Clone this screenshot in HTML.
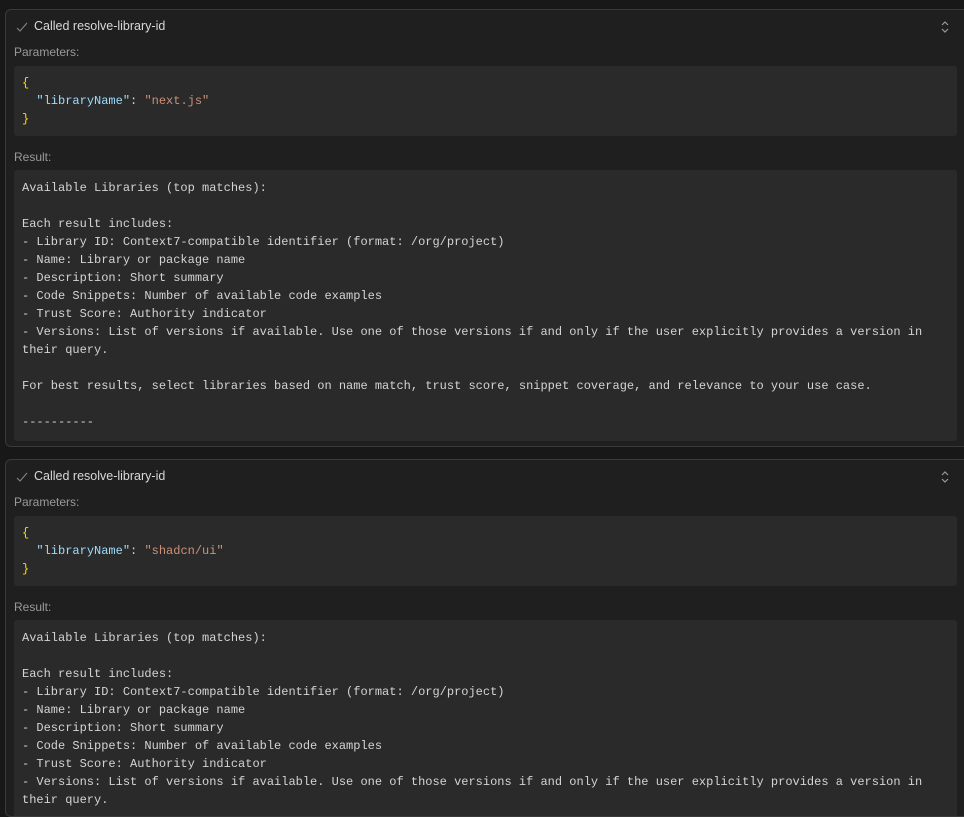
<!DOCTYPE html>
<html style="width:964px;height:817px;overflow:hidden"><head><meta charset="utf-8"><style>
*{margin:0;padding:0;box-sizing:border-box}
body{width:964px;height:817px;background:#181818;overflow:hidden;position:relative;font-family:"Liberation Sans",sans-serif}
.card{position:absolute;left:5px;width:965px;background:#1f1f1f;border:1px solid #3a3a3a;border-radius:6px;overflow:hidden}
.hdr{position:absolute;left:10px;font-size:12.5px;color:#d8d8d8}
.hdr svg{position:absolute;left:0;top:3px}
.lbl{position:absolute;left:8px;font-size:12px;color:#9a9a9a}
.blk{position:absolute;left:8px;width:943px;background:#2a2a2a;border-radius:3px;font-family:"Liberation Mono",monospace;font-size:12px;line-height:18px;color:#d4d4d4;white-space:pre;padding:8px 8px}
.b{color:#ffd700}.k{color:#9cdcfe}.s{color:#ce9178}
.chev{position:absolute;right:19px;top:10px}
</style></head><body>

<div class="card" style="top:9px;height:438px">
 <div class="hdr" style="top:9px"><svg width="12" height="10" viewBox="0 0 12 10"><path d="M1 6l3 3 7-8" fill="none" stroke="#888" stroke-width="1"/></svg><span style="margin-left:18px">Called resolve-library-id</span></div>
 <svg class="chev" width="10" height="14" viewBox="0 0 10 14"><path d="M2 5l3-3 3 3M2 9l3 3 3-3" fill="none" stroke="#999" stroke-width="1.2"/></svg>
 <div class="lbl" style="top:35px">Parameters:</div>
 <div class="blk" style="top:56px;height:70px;padding-top:8px"><span class="b">{</span>
  <span class="k">"libraryName"</span>: <span class="s">"next.js"</span>
<span class="b">}</span></div>
 <div class="lbl" style="top:140px">Result:</div>
 <div class="blk" style="top:160px;height:271px;padding-top:9px">Available Libraries (top matches):

Each result includes:
- Library ID: Context7-compatible identifier (format: /org/project)
- Name: Library or package name
- Description: Short summary
- Code Snippets: Number of available code examples
- Trust Score: Authority indicator
- Versions: List of versions if available. Use one of those versions if and only if the user explicitly provides a version in
their query.

For best results, select libraries based on name match, trust score, snippet coverage, and relevance to your use case.

----------</div>
</div>

<div class="card" style="top:459px;height:358px">
 <div class="hdr" style="top:9px"><svg width="12" height="10" viewBox="0 0 12 10"><path d="M1 6l3 3 7-8" fill="none" stroke="#888" stroke-width="1"/></svg><span style="margin-left:18px">Called resolve-library-id</span></div>
 <svg class="chev" width="10" height="14" viewBox="0 0 10 14"><path d="M2 5l3-3 3 3M2 9l3 3 3-3" fill="none" stroke="#999" stroke-width="1.2"/></svg>
 <div class="lbl" style="top:35px">Parameters:</div>
 <div class="blk" style="top:56px;height:70px;padding-top:8px"><span class="b">{</span>
  <span class="k">"libraryName"</span>: <span class="s">"shadcn/ui"</span>
<span class="b">}</span></div>
 <div class="lbl" style="top:140px">Result:</div>
 <div class="blk" style="top:160px;height:200px;padding-top:9px">Available Libraries (top matches):

Each result includes:
- Library ID: Context7-compatible identifier (format: /org/project)
- Name: Library or package name
- Description: Short summary
- Code Snippets: Number of available code examples
- Trust Score: Authority indicator
- Versions: List of versions if available. Use one of those versions if and only if the user explicitly provides a version in
their query.</div>
</div>
</body></html>
